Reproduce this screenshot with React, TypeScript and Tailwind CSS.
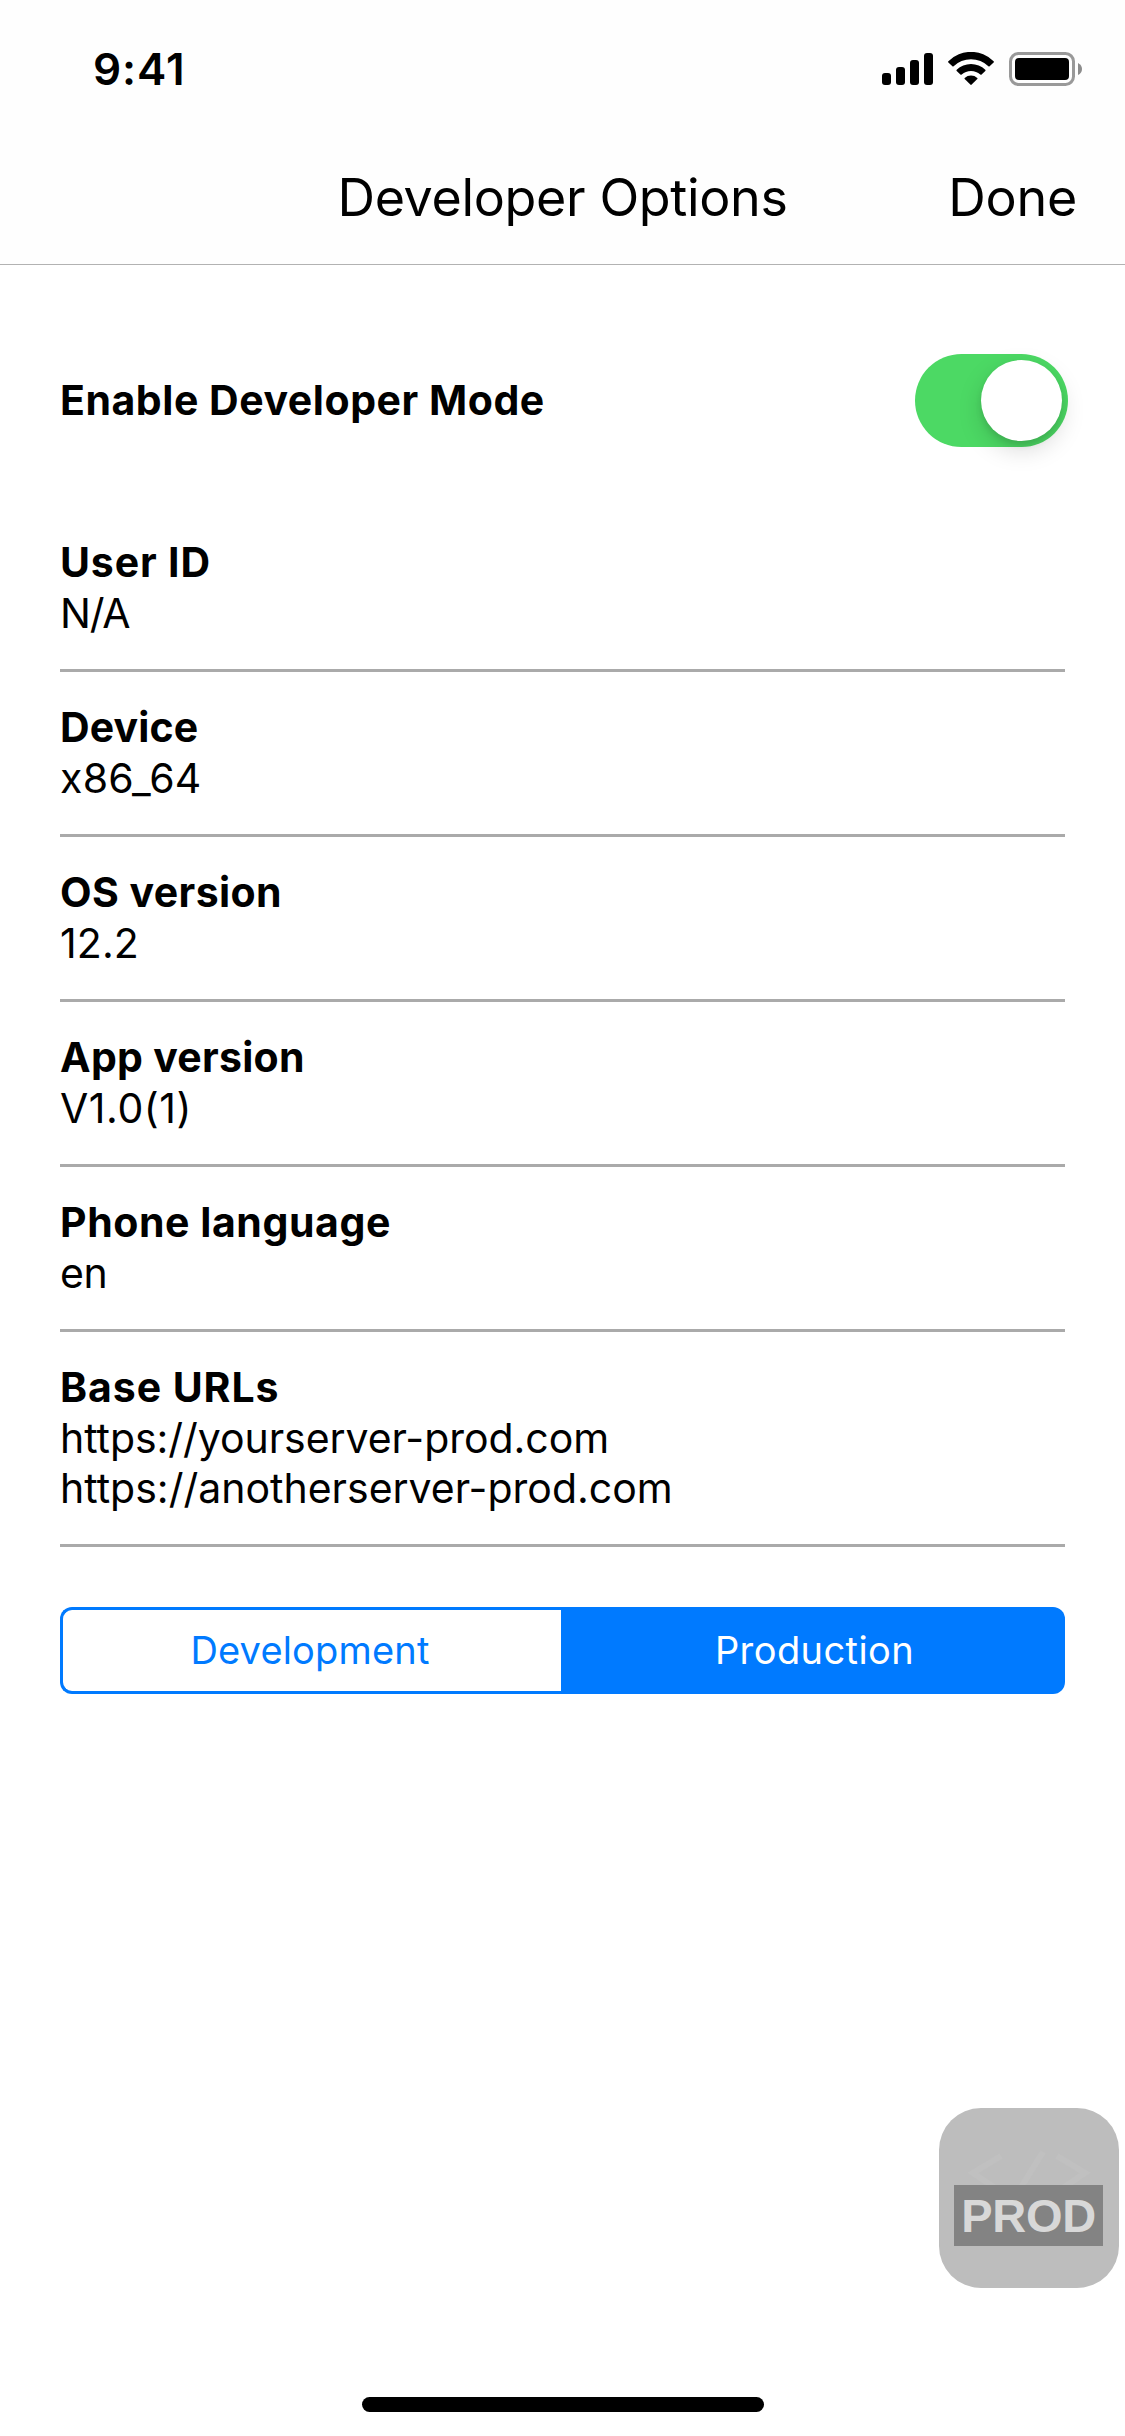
type InfoItem = {
  label: string;
  labelClass: string;
  values: { text: string; className: string }[];
};

const items: InfoItem[] = [
  { label: "User ID", labelClass: "tracking-[0.85px]", values: [{ text: "N/A", className: "tracking-[-1.2px]" }] },
  { label: "Device", labelClass: "tracking-[0.12px]", values: [{ text: "x86_64", className: "tracking-[0.25px]" }] },
  { label: "OS version", labelClass: "tracking-[0.42px]", values: [{ text: "12.2", className: "tracking-[0.1px]" }] },
  { label: "App version", labelClass: "tracking-[0.28px]", values: [{ text: "V1.0(1)", className: "tracking-[0.56px]" }] },
  { label: "Phone language", labelClass: "tracking-[0.57px]", values: [{ text: "en", className: "tracking-[-0.3px]" }] },
  {
    label: "Base URLs",
    labelClass: "tracking-[0.93px]",
    values: [
      { text: "https://yourserver-prod.com", className: "tracking-[-0.05px]" },
      { text: "https://anotherserver-prod.com", className: "" },
    ],
  },
];

function StatusIcons() {
  return (
    <svg width="200" height="34" viewBox="0 0 200 34" fill="#000">
      <rect x="0" y="21" width="9" height="12" rx="3" />
      <rect x="14" y="15" width="9" height="18" rx="3" />
      <rect x="28" y="8" width="9" height="25" rx="3" />
      <rect x="42" y="1" width="9" height="32" rx="3" />
      <path d="M66.4 9.2A32 32 0 0 1 111.6 9.2Q112.3 9.9 111.6 10.6L107.6 14.3Q107 14.8 106.4 14.3A25 25 0 0 0 71.6 14.3Q71 14.8 70.4 14.3L66.4 10.6Q65.7 9.9 66.4 9.2Z" />
      <path d="M74.7 17.7A20.5 20.5 0 0 1 103.3 17.7Q103.9 18.4 103.3 19L99.6 22.5Q99 23 98.3 22.5A13.8 13.8 0 0 0 79.7 22.5Q79 23 78.4 22.5L74.7 19Q74.1 18.4 74.7 17.7Z" />
      <path d="M82.7 26A9.4 9.4 0 0 1 95.3 26Q95.8 26.5 95.3 27.1L89.7 32.6Q89 33.2 88.3 32.6L82.7 27.1Q82.2 26.5 82.7 26Z" />
      <rect x="128.5" y="1.5" width="63" height="31" rx="8" fill="none" stroke="#999" strokeWidth="3" />
      <rect x="133" y="6" width="54" height="22" rx="4" />
      <path d="M196 11Q200 13 200 17Q200 21 196 23Z" fill="#8c8c8c" />
    </svg>
  );
}

function Toggle() {
  return (
    <button className="flex h-[93px] w-[153px] items-center justify-end rounded-full bg-[#4cd964] pr-[6px]">
      <span className="h-[81px] w-[81px] rounded-full bg-white shadow-[0_9px_24px_rgba(0,0,0,0.15),0_4px_6px_rgba(0,0,0,0.1)]" />
    </button>
  );
}

function EnvironmentBadge() {
  return (
    <div className="absolute top-[2108px] right-[6px] h-[180px] w-[180px] rounded-[42px] bg-[#bdbdbd]">
      <svg className="absolute inset-0" width="180" height="180" fill="none" stroke="#c0c0c0" strokeWidth="6">
        <path d="M62 48L34 65L56 80M104 44L79 84M118 48L146 65L124 80" />
      </svg>
      <div className="absolute top-[77px] left-[15px] flex h-[61px] w-[149px] items-center justify-center bg-[#838383] font-['Liberation_Sans',sans-serif] text-[47px] leading-none font-bold tracking-[-0.3px] text-[#d8d8d8]">
        PROD
      </div>
    </div>
  );
}

export default function App() {
  return (
    <div className="relative flex h-[2436px] w-[1125px] flex-col bg-white font-['Inter',sans-serif] text-black">
      <header className="border-b border-[#b2b2b2] bg-[#fefefe]">
        <div className="flex h-[132px] items-center justify-between pt-[6px] pr-[43px] pl-[93px]">
          <span className="text-[44px] leading-none font-semibold tracking-[0.97px]">9:41</span>
          <StatusIcons />
        </div>
        <nav className="grid h-[132px] grid-cols-[1fr_auto_1fr] items-center pr-[48px] pl-[48px] text-[52px] leading-none">
          <span />
          <h1 className="tracking-[-0.35px]">Developer Options</h1>
          <button className="justify-self-end tracking-[-0.28px]">Done</button>
        </nav>
      </header>

      <main className="flex flex-col px-[60px] pt-[89px] text-[41px]">
        <div className="-mr-[3px] mb-[60px] flex items-center justify-between">
          <span className="leading-[51px] font-bold tracking-[0.54px]">Enable Developer Mode</span>
          <Toggle />
        </div>

        {items.map((item) => (
          <section key={item.label} className="border-b-[3px] border-[#aaaaaa] pt-[30px] pb-[31px]">
            <h2 className={`leading-[51px] font-bold ${item.labelClass}`}>{item.label}</h2>
            {item.values.map((value) => (
              <p key={value.text} className={`leading-[50px] ${value.className}`}>
                {value.text}
              </p>
            ))}
          </section>
        ))}

        <div className="mt-[60px] flex h-[87px] text-[38px]">
          <button className="w-[501px] rounded-l-[12px] border-[3px] border-r-0 border-[#007aff] pr-[4px] tracking-[0.18px] text-[#007aff]">
            Development
          </button>
          <button className="flex-1 rounded-r-[12px] bg-[#007aff] pl-[3px] tracking-[0.41px] text-white">Production</button>
        </div>
      </main>

      <EnvironmentBadge />
      <div className="mt-auto mb-[24px] ml-[362px] h-[15px] w-[402px] rounded-full bg-black" />
    </div>
  );
}
